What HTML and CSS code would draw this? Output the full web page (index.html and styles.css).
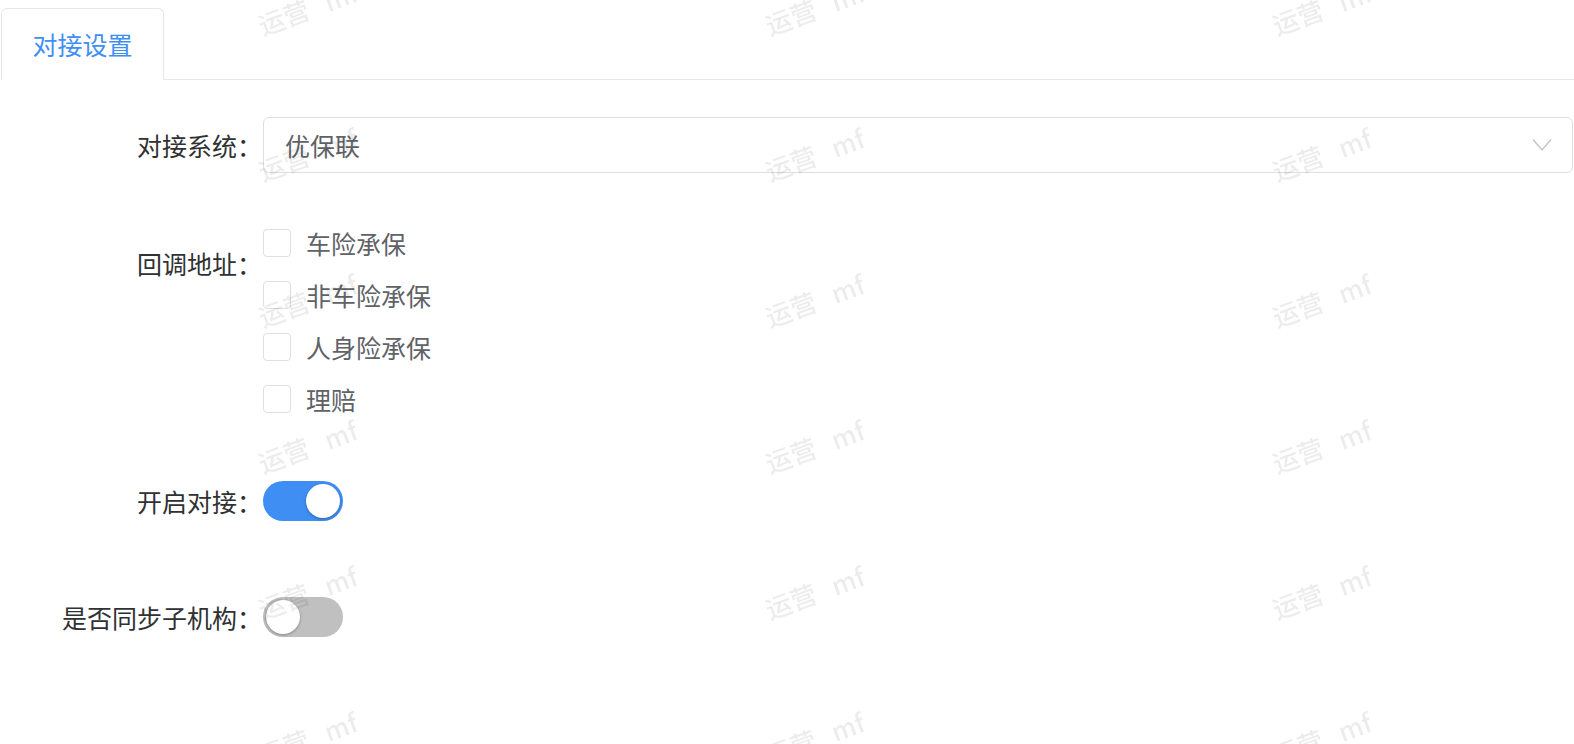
FILE: index.html
```html
<!DOCTYPE html>
<html lang="zh-CN">
<head>
    <meta charset="UTF-8" />
    <meta name="viewport" content="width=device-width, initial-scale=1" />
    <title>对接设置</title>
    <link rel="stylesheet" href="styles.css">
</head>
<body>

    <div class="tabs">
        <div class="tab-nav">
            <div class="tab active">对接设置</div>
            <div class="tab-rest"></div>
        </div>
    </div>

    <form class="config-form">
        <div class="form-item">
            <label class="form-label">对接系统：</label>
            <div class="form-content">
                <div class="select">
                    <span class="select-value">优保联</span>
                    <svg class="select-arrow" width="20" height="14" viewBox="0 0 20 14">
                        <path d="M1 1.5 L10 12 L19 1.5" fill="none" stroke="#c0c4cc" stroke-width="1.4" />
                    </svg>
                </div>
            </div>
        </div>

        <div class="form-item item-callback">
            <label class="form-label">回调地址：</label>
            <div class="form-content">
                <div class="checkbox-group">
                    <label class="checkbox"><span class="checkbox-box"></span><span class="checkbox-text">车险承保</span></label>
                    <label class="checkbox"><span class="checkbox-box"></span><span class="checkbox-text">非车险承保</span></label>
                    <label class="checkbox"><span class="checkbox-box"></span><span class="checkbox-text">人身险承保</span></label>
                    <label class="checkbox"><span class="checkbox-box"></span><span class="checkbox-text">理赔</span></label>
                </div>
            </div>
        </div>

        <div class="form-item item-open">
            <label class="form-label">开启对接：</label>
            <div class="form-content">
                <span class="switch is-on"><span class="switch-knob"></span></span>
            </div>
        </div>

        <div class="form-item item-sync">
            <label class="form-label">是否同步子机构：</label>
            <div class="form-content">
                <span class="switch"><span class="switch-knob"></span></span>
            </div>
        </div>
    </form>

    <div class="watermark">
        <span>运营&nbsp;&nbsp;&nbsp;mf</span><span>运营&nbsp;&nbsp;&nbsp;mf</span><span>运营&nbsp;&nbsp;&nbsp;mf</span>
        <span>运营&nbsp;&nbsp;&nbsp;mf</span><span>运营&nbsp;&nbsp;&nbsp;mf</span><span>运营&nbsp;&nbsp;&nbsp;mf</span>
        <span>运营&nbsp;&nbsp;&nbsp;mf</span><span>运营&nbsp;&nbsp;&nbsp;mf</span><span>运营&nbsp;&nbsp;&nbsp;mf</span>
        <span>运营&nbsp;&nbsp;&nbsp;mf</span><span>运营&nbsp;&nbsp;&nbsp;mf</span><span>运营&nbsp;&nbsp;&nbsp;mf</span>
        <span>运营&nbsp;&nbsp;&nbsp;mf</span><span>运营&nbsp;&nbsp;&nbsp;mf</span><span>运营&nbsp;&nbsp;&nbsp;mf</span>
        <span>运营&nbsp;&nbsp;&nbsp;mf</span><span>运营&nbsp;&nbsp;&nbsp;mf</span><span>运营&nbsp;&nbsp;&nbsp;mf</span>
    </div>

</body>
</html>
```

FILE: styles.css
```css
* {
    box-sizing: border-box;
    margin: 0;
    padding: 0;
}

body {
    font-family: "Noto Sans CJK SC", "Noto Sans", sans-serif;
    font-size: 25px;
    background-color: #fff;
    color: #303133;
    overflow: hidden;
}

/* tabs */
.tab-nav {
    display: flex;
    padding: 8px 0 0 1px;
}

.tab {
    width: 163px;
    height: 72px;
    line-height: 70px;
    text-align: center;
    border: 1px solid #e4e7ed;
    border-bottom: none;
    border-radius: 6px 6px 0 0;
}

    .tab.active {
        color: #3f8ef3;
    }

.tab-rest {
    flex: 1;
    border-bottom: 1px solid #e4e7ed;
}

/* form */
.config-form {
    padding: 37px 1px 0 0;
}

.form-item {
    display: flex;
    align-items: flex-start;
}

.form-label {
    flex: 0 0 263px;
    padding-right: 1px;
    line-height: 56px;
    text-align: right;
    color: #303133;
}

.form-content {
    flex: 1;
    min-height: 56px;
    display: flex;
    align-items: center;
}

.item-callback {
    margin-top: 43px;
}

    .item-callback .form-label {
        margin-top: 19px;
    }

.item-open {
    margin-top: 48px;
}

.item-sync {
    margin-top: 60px;
}

/* select */
.select {
    flex: 1;
    height: 56px;
    display: flex;
    align-items: center;
    justify-content: space-between;
    padding: 0 20px 0 21px;
    border: 1px solid #dcdfe6;
    border-radius: 6px;
    color: #606266;
}

.select-arrow {
    display: block;
}

/* checkbox */
.checkbox-group {
    display: flex;
    flex-direction: column;
    padding-top: 1px;
}

.checkbox {
    display: flex;
    align-items: center;
    height: 52px;
    color: #606266;
}

.checkbox-box {
    width: 28px;
    height: 28px;
    border: 1.5px solid #dcdfe6;
    border-radius: 4px;
    background: #fff;
    margin-right: 15px;
}

/* switch */
.switch {
    position: relative;
    display: inline-block;
    width: 80px;
    height: 40px;
    border-radius: 20px;
    background-color: #c0c0c0;
}

    .switch.is-on {
        background-color: #3f8ef3;
    }

.switch-knob {
    position: absolute;
    top: 3px;
    left: 3px;
    width: 34px;
    height: 34px;
    border-radius: 50%;
    background: #fff;
    box-shadow: 0 1px 3px rgba(0, 0, 0, 0.3);
}

.switch.is-on .switch-knob {
    left: auto;
    right: 3px;
}

/* watermark */
.watermark {
    position: fixed;
    top: -66px;
    left: 54px;
    display: grid;
    grid-template-columns: repeat(3, 507px);
    grid-auto-rows: 146px;
    place-items: center;
    pointer-events: none;
    z-index: 10;
}

    .watermark span {
        font-family: "Noto Sans CJK SC", "Liberation Sans", sans-serif;
        font-size: 26px;
        font-weight: 500;
        color: rgba(0, 0, 0, 0.075);
        white-space: nowrap;
        transform: rotate(-20deg);
    }
```
